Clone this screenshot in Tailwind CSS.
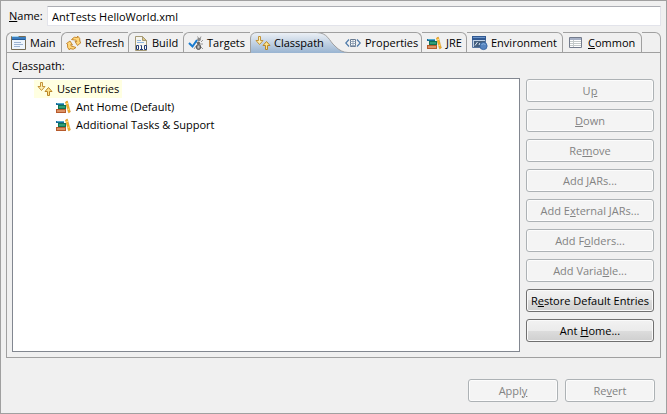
<!DOCTYPE html>
<html lang="en">
<head>
<meta charset="utf-8">
<title>AntTests HelloWorld.xml</title>
<script src="https://cdn.jsdelivr.net/npm/@tailwindcss/browser@4"></script>
</head>
<body class="flex min-h-screen flex-col border border-[#a0a0a0] bg-[#f0f0f0] px-[5px] pt-[5px] font-['Open_Sans',sans-serif] text-[11px] leading-4 text-black">

<!-- Shared icons -->
<svg class="hidden">
  <symbol id="arrows" viewBox="0 0 16 16">
    <path d="M3.500 1.500h2v4h2.500L4.500 9.500 1 5.500h2.500z" fill="#fff0b0" stroke="#c39339"/>
    <path d="M10.500 14.500h2v-4h2.500L11.500 6.500 8 10.500h2.500z" fill="#ffe48a" stroke="#b98628"/>
  </symbol>
  <symbol id="books" viewBox="0 0 16 16">
    <path d="M1 4h8v2H1z" fill="#176a96"/><path d="M2 4.500h7" stroke="#4fa9cd"/>
    <path d="M3 6h8v4H3z" fill="#0d7554"/><path d="M4 8h6" stroke="#58c49a"/>
    <path d="M1 10h10v4H1z" fill="#b65a2c"/><path d="M2 12h8" stroke="#ecac80" stroke-width="1.400"/>
    <path d="M10.500 3l1.800-1 3 11-1.800.8z" fill="#f8b526" stroke="#d08a18" stroke-width=".6"/>
    <path d="M11 5l2-.6M12.500 10.500l2-.6" stroke="#ffe58b"/>
  </symbol>
</svg>

<div class="flex items-center">
  <label for="name" class="w-[41px] pl-[3px]"><u>N</u>ame:</label>
  <input id="name" type="text" value="AntTests HelloWorld.xml" class="h-5 min-w-0 flex-1 rounded-[1px] border border-[#e2e3ea] border-t-[#abadb3] bg-white px-1 outline-none">
</div>

<main class="mt-1.5">
  <div role="tablist" class="flex h-[21px]">
    <button role="tab" class="flex w-[55px] shrink-0 items-center gap-[3px] rounded-tl-[6px] border-t border-b border-l border-[#a0a0a0] pl-1">
      <svg class="size-4 shrink-0" viewBox="0 0 16 16"><path d="M.5 1.500h14v13H.5z" fill="#eff6fd" stroke="#776d55"/><path d="M1 1h6l1 1h7v3H1z" fill="#3c7fc0"/><path d="M1 1h6l1 1H1z" fill="#a7d5ef"/><path d="M1 4.500h13" stroke="#255b96"/><path d="M3 7.500h7M3 9.500h9M3 11.500h6" stroke="#9db4d2"/></svg>
      Main
    </button>
    <button role="tab" class="flex w-[67px] shrink-0 items-center gap-[3px] rounded-tl-[6px] border-t border-b border-l border-[#a0a0a0] pl-1">
      <svg class="size-4 shrink-0" viewBox="0 0 16 16" fill="#ffd77a" stroke="#c08028" stroke-width=".9"><path d="M5.500 4.500Q8 1 11.500 2.500L11.500 1Q14.500 2.500 14 7l1 .5-3.500 3-2.500-4 1.800.2Q10.500 4.500 8.500 5z"/><path d="M10 12.500Q7.500 15.500 4 13.500L3.500 15Q.8 13 1.500 9L.5 8.500 4 6l2.500 4-1.800-.3Q5 12 7 11.500z"/></svg>
      Refresh
    </button>
    <button role="tab" class="flex w-[55px] shrink-0 items-center gap-[3px] rounded-tl-[6px] border-t border-b border-l border-[#a0a0a0] pl-1">
      <svg class="size-4 shrink-0" viewBox="0 0 16 16"><path d="M2.500 15.500V1.500h7l4 4v10z" fill="#f5f5f0" stroke="#a59a76"/><path d="M9.500 1.500v4h4z" fill="#dec886" stroke="#a59a76"/><path d="M4 5.500h4M4 7.500h7" stroke="#8eb4dc"/><path d="M3 9h10v6H3z" fill="#f5f5f0"/><path d="M3.500 10.500h2v4h-2zM11.500 10.500h2v4h-2zM7.500 10.500h1v4M7 14.500h3" fill="none" stroke="#203a76"/></svg>
      Build
    </button>
    <button role="tab" class="flex w-[67px] shrink-0 items-center gap-[3px] rounded-tl-[6px] border-t border-b border-l border-[#a0a0a0] pl-1">
      <svg class="size-4 shrink-0" viewBox="0 0 16 16" fill="none"><path d="M11 4L9.500 1.500M12 4l1-2.500M13 7l2-2M12 9h3M12 11l3 3M8 11l-2 3M9 8L7 6" stroke="#808080" stroke-width=".8"/><circle cx="11" cy="4.500" r="1.800" fill="#888"/><circle cx="10.500" cy="8" r="1.600" fill="#666"/><ellipse cx="10.500" cy="12" rx="2.200" ry="2.500" fill="#999" stroke="#555"/><path d="M10 12h1" stroke="#eee"/><path d="M1 8l3.500 3.500L9 5" stroke="#177bd0" stroke-width="2"/></svg>
      Targets
    </button>
    <button role="tab" aria-selected="true" class="relative flex w-[91px] shrink-0 items-center gap-[3px] pl-[5px]">
      <svg class="absolute top-0 left-0 h-[21px] w-[98px]" viewBox="0 0 98 21">
        <defs><linearGradient id="sel" x1="0" y1="0" x2="0" y2="1"><stop offset="0" stop-color="#edf1f6"/><stop offset="1" stop-color="#99b4d1"/></linearGradient></defs>
        <path d="M.5 21V6Q1 .5 7 .5H66C78 .5 79 9 85 14Q91 20.500 98 20.500V21z" fill="url(#sel)"/>
        <path d="M.5 21V6Q1 .5 7 .5H66C78 .5 79 9 85 14Q91 20.500 98 20.500" fill="none" stroke="#a0a0a0"/>
      </svg>
      <svg class="relative size-4 shrink-0"><use href="#arrows"/></svg>
      <span class="relative">Classpath</span>
    </button>
    <button role="tab" class="-ml-[23px] flex w-[104px] shrink-0 items-center gap-1 rounded-tr-[6px] border-t border-r border-[#a0a0a0] bg-[linear-gradient(#a0a0a0,#a0a0a0)] bg-[length:74px_1px] bg-right-bottom bg-no-repeat pl-[27px]">
      <svg class="size-4 shrink-0" viewBox="0 0 16 16" fill="none"><path d="M4 4.500L.8 8 4 11.500M12 4.500L15.200 8 12 11.500" stroke="#4e7bab" stroke-width="1.200"/><path d="M5.500 4.500h5v7h-5z" fill="#fff" stroke="#697b91"/><path d="M5 6.500h6M5 8.500h6M5 10.500h6M8 5v7" stroke="#8798ac" stroke-width=".8"/></svg>
      Properties
    </button>
    <button role="tab" class="flex w-[45px] shrink-0 items-center gap-1 rounded-tr-[6px] border-t border-r border-b border-[#a0a0a0] pl-1">
      <svg class="size-4 shrink-0"><use href="#books"/></svg>
      JRE
    </button>
    <button role="tab" class="flex w-[96px] shrink-0 items-center gap-[3px] rounded-tr-[6px] border-t border-r border-b border-[#a0a0a0] pl-[5px]">
      <svg class="size-4 shrink-0" viewBox="0 0 16 16"><path d="M.5 1.500h13v11H.5z" fill="#c3d4e8" stroke="#5876a2"/><path d="M0 1h14v4H0z" fill="#315992"/><path d="M1 2.500h12" stroke="#6c95ca"/><path d="M2 6h11v6H2z" fill="#45607f"/><path d="M3 10.500l2.500-3.500M7 10l1-2" stroke="#e6eef8"/><circle cx="11.500" cy="11" r="3.600" fill="#5684bf" stroke="#3b69a5"/><path d="M9.500 9.500q2-1.500 4 0" fill="none" stroke="#8ab4df"/></svg>
      Environment
    </button>
    <button role="tab" class="flex w-[79px] shrink-0 items-center gap-1 rounded-tr-[6px] border-t border-r border-b border-[#a0a0a0] pl-[5px]">
      <svg class="size-4 shrink-0" viewBox="0 0 16 16"><path d="M1.500 2.500h12v10h-12z" fill="#fff" stroke="#747c8d"/><path d="M2 3h11v2H2z" fill="#a6b0c5"/><path d="M2 6.500h11M2 8.500h11M2 10.500h11M5.500 5v7" stroke="#c3c9c9"/></svg>
      <span><u>C</u>ommon</span>
    </button>
    <div class="flex-1 rounded-tr-[6px] border-t border-r border-b border-[#a0a0a0]"></div>
  </div>

  <section role="tabpanel" class="border-x border-b border-[#a0a0a0] px-[5px] pt-[5px] pb-[5px]">
    <h2 id="tree-label" class="h-5">C<u>l</u>asspath:</h2>
    <div class="flex gap-1.5 pr-px">
      <ul role="tree" aria-labelledby="tree-label" class="h-[274px] min-w-0 flex-1 border border-[#828790] bg-white pt-px leading-[18px]">
        <li role="treeitem">
          <div class="ml-[21px] flex w-[88px] items-center gap-1 bg-[#ffffe1] pl-[3px]"><svg class="size-4 shrink-0"><use href="#arrows"/></svg>User Entries</div>
          <ul role="group">
            <li role="treeitem" class="flex items-center gap-[5px] pl-[42px]"><svg class="size-4 shrink-0"><use href="#books"/></svg>Ant Home (Default)</li>
            <li role="treeitem" class="flex items-center gap-[5px] pl-[42px]"><svg class="size-4 shrink-0"><use href="#books"/></svg>Additional Tasks &amp; Support</li>
          </ul>
        </li>
      </ul>
      <div class="flex w-32 shrink-0 flex-col gap-[7px] pt-px">
        <button disabled class="h-[23px] rounded-[3px] border border-[#adb2b5] bg-[#f4f4f4] text-[#838383] inset-ring inset-ring-[#fcfcfc]">U<u>p</u></button>
        <button disabled class="h-[23px] rounded-[3px] border border-[#adb2b5] bg-[#f4f4f4] text-[#838383] inset-ring inset-ring-[#fcfcfc]"><u>D</u>own</button>
        <button disabled class="h-[23px] rounded-[3px] border border-[#adb2b5] bg-[#f4f4f4] text-[#838383] inset-ring inset-ring-[#fcfcfc]">Re<u>m</u>ove</button>
        <button disabled class="h-[23px] rounded-[3px] border border-[#adb2b5] bg-[#f4f4f4] text-[#838383] inset-ring inset-ring-[#fcfcfc]">Add <u>J</u>ARs...</button>
        <button disabled class="h-[23px] rounded-[3px] border border-[#adb2b5] bg-[#f4f4f4] text-[#838383] inset-ring inset-ring-[#fcfcfc]">Add E<u>x</u>ternal JARs...</button>
        <button disabled class="h-[23px] rounded-[3px] border border-[#adb2b5] bg-[#f4f4f4] text-[#838383] inset-ring inset-ring-[#fcfcfc]">Add F<u>o</u>lders...</button>
        <button disabled class="h-[23px] rounded-[3px] border border-[#adb2b5] bg-[#f4f4f4] text-[#838383] inset-ring inset-ring-[#fcfcfc]">Add Varia<u>b</u>le...</button>
        <button class="h-[23px] rounded-[3px] border border-[#707070] bg-[linear-gradient(#f2f2f2,#ebebeb_50%,#dddddd_50%,#cfcfcf)] inset-ring inset-ring-[#fafafa]">R<u>e</u>store Default Entries</button>
        <button class="h-[23px] rounded-[3px] border border-[#707070] bg-[linear-gradient(#f2f2f2,#ebebeb_50%,#dddddd_50%,#cfcfcf)] inset-ring inset-ring-[#fafafa]">Ant <u>H</u>ome...</button>
      </div>
    </div>
  </section>
</main>

<footer class="mt-[21px] flex justify-end gap-[7px] pr-[6px]">
  <button disabled class="h-[23px] w-[90px] rounded-[3px] border border-[#adb2b5] bg-[#f4f4f4] text-[#838383] inset-ring inset-ring-[#fcfcfc]">Appl<u>y</u></button>
  <button disabled class="h-[23px] w-[90px] rounded-[3px] border border-[#adb2b5] bg-[#f4f4f4] text-[#838383] inset-ring inset-ring-[#fcfcfc]">Re<u>v</u>ert</button>
</footer>
</body>
</html>
